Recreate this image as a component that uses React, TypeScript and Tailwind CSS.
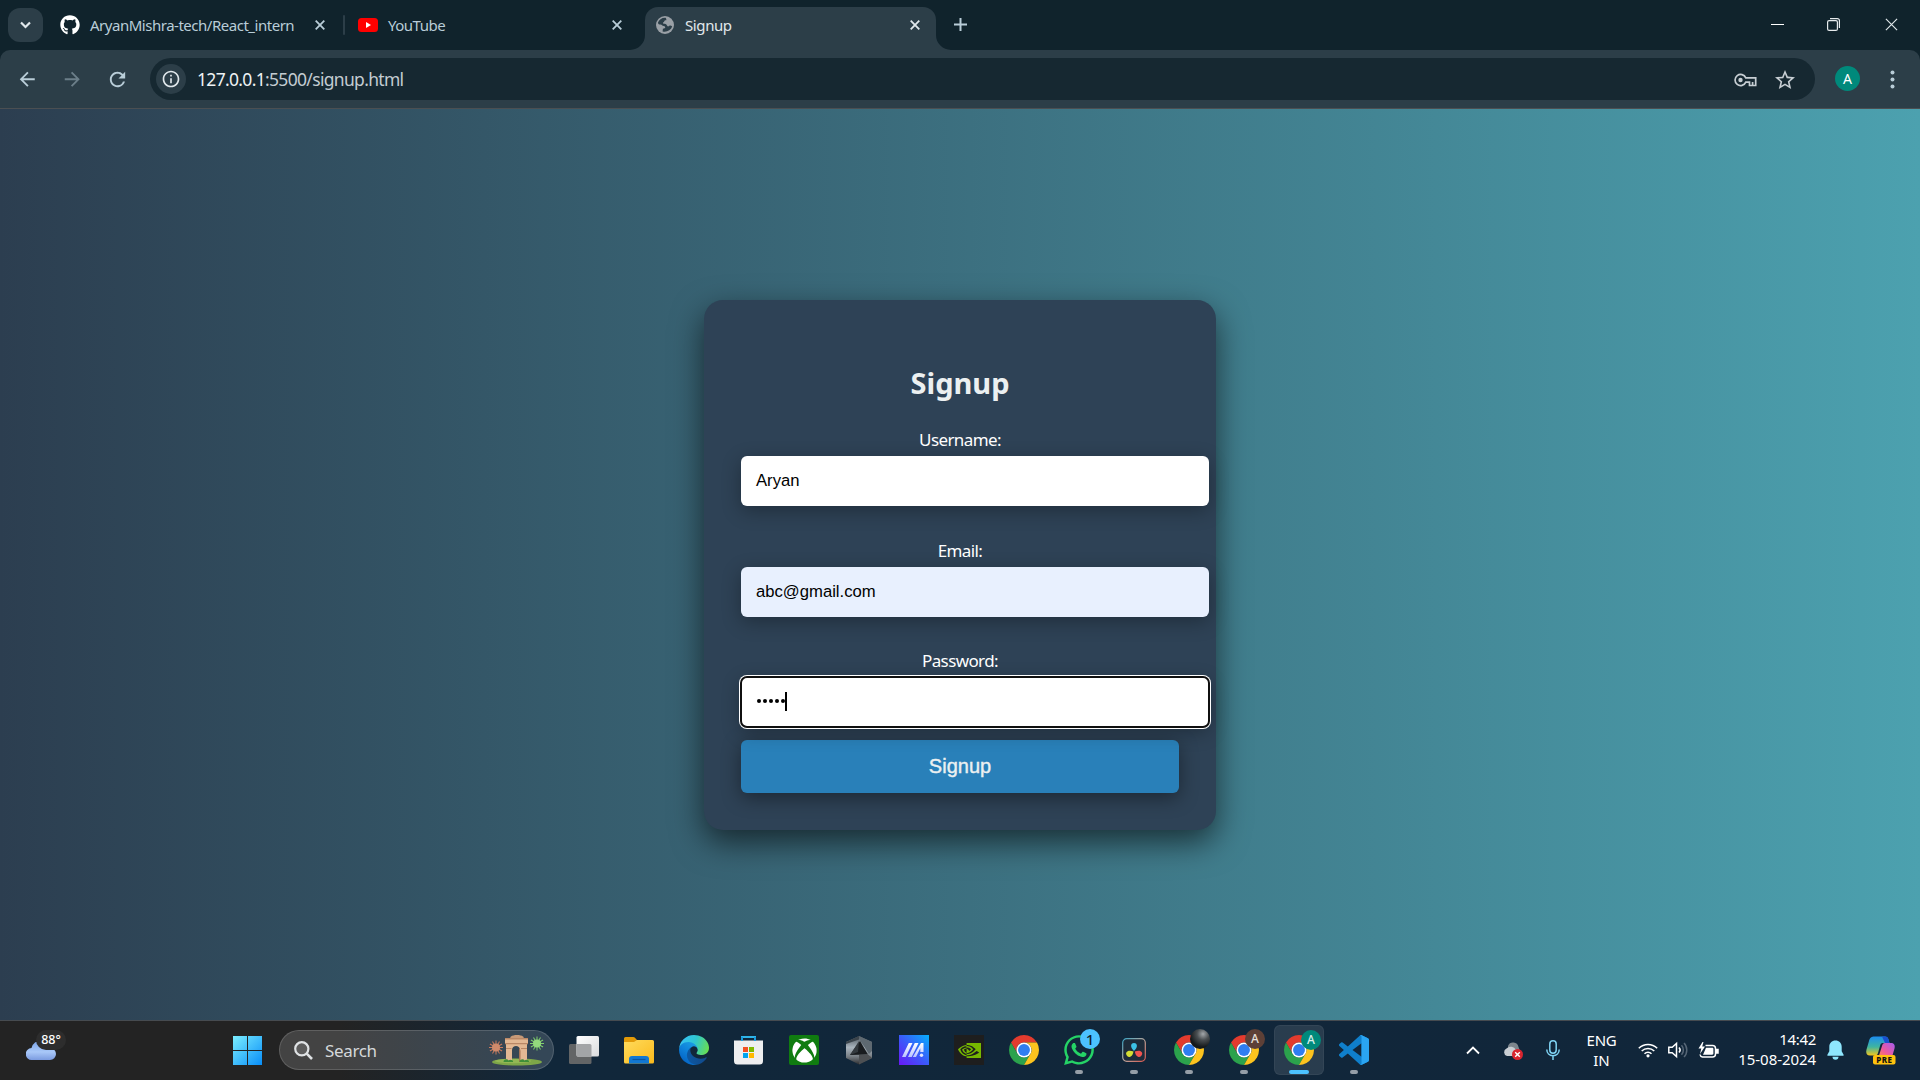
import React from "react";
import { FaGithub, FaWhatsapp, FaXbox } from "react-icons/fa";
import { SiNvidia } from "react-icons/si";
import { MdArrowBack, MdArrowForward, MdRefresh, MdInfoOutline, MdStarOutline } from "react-icons/md";

const UI = "font-['Noto_Sans','Open_Sans',sans-serif]";

function Cross({ size = 10, color = "#b9cdd8", w = 1.8 }: { size?: number; color?: string; w?: number }) {
  return (
    <svg width={size} height={size} viewBox="0 0 10 10" stroke={color} strokeWidth={w} className="shrink-0">
      <path d="M.7.7 9.3 9.3M9.3.7.7 9.3" />
    </svg>
  );
}

function GlobeIcon() {
  return (
    <svg width="18" height="18" viewBox="0 0 18 18" className="shrink-0">
      <circle cx="9" cy="9" r="9" fill="#9aa0a6" />
      <path
        d="M9.6 1.7C6 1.4 2.9 3.5 1.9 6.8c.2 1.4 1.3 1.7 2.6 1.8 1.6.1 1.5 1.3 3.2 1.5 1.2.2 1.5.7 1.5 1.5s-.9 1.1-2.3 1.1l-.3 2.8c3.9 1 8.2-.9 9.6-4.900-1.200-1.500-3-1.100-3.900-.200-1.200 0-1.400-2.100-2.700-2.500-1.200-.3-2.700 0-2.700-.9s1.300-.8 1.400-1.800c.1-.9 1.200-.9 2-.9.300-.9-.2-1.800-.7-2.600z"
        fill="#2c3e48"
      />
    </svg>
  );
}

function ChromeIcon() {
  return (
    <svg width="30" height="30" viewBox="2 2 44 44">
      <path fill="#e33b2e" d="M24 13h19.05A22 22 0 0 0 4.95 13l9.52 16.500A11 11 0 0 1 24 13z" />
      <path fill="#2ba24c" d="M14.470 29.5 4.950 13A22 22 0 0 0 24 46l9.530-16.500A11 11 0 0 1 14.470 29.500z" />
      <path fill="#fcc31e" d="M33.530 29.500 24 46A22 22 0 0 0 43.050 13H24a11 11 0 0 1 9.530 16.500z" />
      <circle cx="24" cy="24" r="11" fill="#fff" />
      <circle cx="24" cy="24" r="8.700" fill="#2f7df0" />
    </svg>
  );
}

function WindowsIcon() {
  return (
    <svg width="30" height="30" viewBox="0 0 30 30">
      <defs>
        <linearGradient id="win" x1="0" y1="0" x2="29" y2="29" gradientUnits="userSpaceOnUse">
          <stop offset="0" stopColor="#7df0ff" />
          <stop offset="1" stopColor="#0a8ff8" />
        </linearGradient>
      </defs>
      <path fill="url(#win)" d="M0 1h14v14H0zM15 1h14v14H15zM0 16h14v14H0zM15 16h14v14H15z" />
    </svg>
  );
}

function TaskViewIcon() {
  return (
    <svg width="30" height="30" viewBox="0 0 30 30">
      <defs>
        <linearGradient id="tv" x2="1" y2="1">
          <stop stopColor="#fff" />
          <stop offset="1" stopColor="#d9dbdd" />
        </linearGradient>
      </defs>
      <rect x="0" y="9" width="22.500" height="20" rx="1.500" fill="#636566" />
      <rect x="7.500" y="1" width="22.500" height="20.500" rx="1.500" fill="url(#tv)" />
      <path d="M7.500 9H21a1.500 1.500 0 0 1 1.500 1.500v11H9a1.500 1.500 0 0 1-1.500-1.500z" fill="#a3a5a7" />
    </svg>
  );
}

function FolderIcon() {
  return (
    <svg width="30" height="30" viewBox="0 0 30 30">
      <defs>
        <linearGradient id="fo" x2="1" y2="1">
          <stop stopColor="#ffdb5c" />
          <stop offset="1" stopColor="#fbba1c" />
        </linearGradient>
      </defs>
      <path d="M0 3.500A1.500 1.500 0 0 1 1.500 2h7.700c.6 0 1.100.2 1.500.6L13 5v6H0z" fill="#e29a08" />
      <path d="M0 7h10l3-2h15.500A1.500 1.500 0 0 1 30 6.500V27a1.500 1.500 0 0 1-1.500 1.500h-27A1.500 1.500 0 0 1 0 27z" fill="url(#fo)" />
      <path d="M5 28.500V24a3 3 0 0 1 3-3h14a3 3 0 0 1 3 3v4.500z" fill="#1278d2" />
      <path d="M8.500 24.500h13" stroke="#0b55a0" strokeWidth="1.200" />
    </svg>
  );
}

function EdgeIcon() {
  return (
    <svg width="30" height="30" viewBox="0 0 256 256">
      <defs>
        <linearGradient id="e1" x1="60" y1="180" x2="230" y2="180" gradientUnits="userSpaceOnUse">
          <stop stopColor="#0c59a4" />
          <stop offset="1" stopColor="#114a8b" />
        </linearGradient>
        <linearGradient id="e2" x1="150" y1="80" x2="50" y2="220" gradientUnits="userSpaceOnUse">
          <stop stopColor="#1b9de2" />
          <stop offset=".5" stopColor="#0f84dc" />
          <stop offset="1" stopColor="#0669c8" />
        </linearGradient>
        <linearGradient id="e3" x1="20" y1="60" x2="250" y2="140" gradientUnits="userSpaceOnUse">
          <stop stopColor="#35c1f1" />
          <stop offset=".45" stopColor="#2fc6cf" />
          <stop offset="1" stopColor="#6be04b" />
        </linearGradient>
      </defs>
      <path fill="url(#e1)" d="M231.070 190.540c-3.420 1.780-6.940 3.350-10.540 4.710-11.490 4.290-23.670 6.490-35.930 6.470-47.360 0-88.610-32.580-88.610-74.380a31.520 31.520 0 0 1 16.430-27.310c-42.840 1.800-53.850 46.440-53.850 72.590 0 73.950 68.150 81.440 82.830 81.440 7.920 0 19.860-2.300 27.030-4.560l1.310-.440a128.340 128.340 0 0 0 66.600-52.830 4 4 0 0 0-5.270-5.690z" />
      <path fill="url(#e2)" d="M105.730 241.420a79.200 79.200 0 0 1-22.740-21.340 80.720 80.720 0 0 1 29.530-120.050c3.140-1.470 8.500-4.140 15.640-4.010a32.350 32.350 0 0 1 25.690 13.020 31.880 31.880 0 0 1 6.360 18.660c0-.210 24.460-79.600-80-79.600-43.900 0-80 41.650-80 78.220a130.150 130.150 0 0 0 12.110 55.990 128 128 0 0 0 156.380 67.100 75.550 75.550 0 0 1-62.780-7.980z" />
      <path fill="url(#e3)" d="M152.330 148.860c-.810 1.050-3.300 2.500-3.300 5.660 0 2.610 1.700 5.120 4.720 7.230 14.380 10 41.490 8.680 41.560 8.680a59.560 59.560 0 0 0 30.270-8.350 61.380 61.380 0 0 0 30.430-52.880c.260-22.410-8-37.310-11.340-43.910C223.460 23.840 177.720 0 128 0A128 128 0 0 0 0 126.200c.480-36.540 36.800-66.050 80-66.050 3.500 0 23.460.340 42 10.070 16.340 8.580 24.900 18.940 30.850 29.210 6.180 10.670 7.280 24.150 7.280 29.520s-2.740 13.330-7.800 19.910z" />
    </svg>
  );
}

function StoreIcon() {
  return (
    <svg width="30" height="30" viewBox="0 0 30 30">
      <path d="M8 7V2h13v5" fill="none" stroke="#2fb5ea" strokeWidth="2" />
      <path d="M0 5.500h29V26a3.500 3.500 0 0 1-3.500 3.500h-22A3.500 3.500 0 0 1 0 26z" fill="#eeeeef" />
      <path d="M8 2v4M21 2v4" stroke="#1598dc" strokeWidth="1.800" />
      <path fill="#f25022" d="M9 12h5v5H9z" />
      <path fill="#7fba00" d="M15 12h5v5h-5z" />
      <path fill="#00a4ef" d="M9 18h5v5H9z" />
      <path fill="#ffb900" d="M15 18h5v5h-5z" />
    </svg>
  );
}

function XboxIcon() {
  return (
    <span className="flex h-[30px] w-[30px] items-center justify-center rounded-[2px] bg-[#107c10]">
      <FaXbox size={25} color="#fff" />
    </span>
  );
}

function HexIcon() {
  return (
    <svg width="30" height="30" viewBox="0 0 30 30">
      <defs>
        <linearGradient id="hx" x1="0" y1="0" x2="0" y2="1">
          <stop stopColor="#4b545b" />
          <stop offset=".4" stopColor="#a9b4bd" />
          <stop offset=".7" stopColor="#7c8389" />
          <stop offset="1" stopColor="#2c2d2f" />
        </linearGradient>
      </defs>
      <path d="M15 1 28 7v16l-13 6.500L2 23V7z" fill="url(#hx)" />
      <path d="M15 1 28 7v9l-3 3-8.500-13z" fill="#5e6971" />
      <path d="M16 6 24 19.500 6 20z" fill="#191c1f" />
      <path d="M15 6 6 20l8-3z" fill="#343a3f" />
      <path d="m24 19.500 4 3.500-13 6.500V20z" fill="#4d5053" />
      <path d="M15 1 2 7v2l13-4.500z" fill="#3b444b" />
    </svg>
  );
}

function MyAsusIcon() {
  return (
    <svg width="30" height="30" viewBox="0 0 30 30">
      <defs>
        <linearGradient id="ma" x1="0" y1="1" x2="1" y2="0">
          <stop stopColor="#6a17f5" />
          <stop offset=".5" stopColor="#3a5bfa" />
          <stop offset="1" stopColor="#05b0fb" />
        </linearGradient>
        <linearGradient id="mb" x2="0" y2="1">
          <stop stopColor="#fff" />
          <stop offset="1" stopColor="#b9c4ff" />
        </linearGradient>
      </defs>
      <path fill="url(#ma)" d="M0 0h30v30H0z" />
      <path fill="url(#mb)" d="M9.800 8h3.700L6.700 22H3zM15.800 8h3.700l-6.800 14H9zM22 8h2.500v9h-3.200v-3.800L17 22h-3.200z" />
      <circle cx="22.500" cy="20.300" r="1.700" fill="#e2e6ff" />
    </svg>
  );
}

function ResolveIcon() {
  return (
    <svg width="24" height="24" viewBox="0 0 24 24">
      <defs>
        <linearGradient id="rs" x2="1" y2="1">
          <stop stopColor="#3aa4c4" />
          <stop offset=".5" stopColor="#b9a69c" />
          <stop offset="1" stopColor="#d9574e" />
        </linearGradient>
      </defs>
      <rect x=".7" y=".7" width="22.600" height="22.600" rx="4" fill="#1d2b3a" stroke="url(#rs)" strokeWidth="1.200" />
      <path d="M12 13c-2-2-2.900-3.500-2.900-5.200a2.900 2.900 0 0 1 5.800 0c0 1.700-.9 3.200-2.900 5.200z" fill="#3cc1e6" />
      <path d="M11.500 13.500c-.5 2.700-1.300 4.200-2.800 4.900a3 3 0 0 1-3-5.200c1.500-.8 3.200-.5 5.800.3z" fill="#d5de33" />
      <path d="M12.800 13.500c2.600-.8 4.300-1.100 5.800-.3a3 3 0 0 1-3 5.200c-1.500-.7-2.300-2.200-2.800-4.900z" fill="#f0524f" />
    </svg>
  );
}

function VsCodeIcon() {
  return (
    <svg width="30" height="30" viewBox="0 0 24 24">
      <path
        fill="#0f7fcb"
        d="M23.150 2.587 18.210.210a1.494 1.494 0 0 0-1.705.290l-9.460 8.630-4.120-3.128a.999.999 0 0 0-1.276.057L.327 7.261A1 1 0 0 0 .326 8.740L3.899 12 .326 15.260a1 1 0 0 0 .001 1.479L1.650 17.940a.999.999 0 0 0 1.276.057l4.120-3.128 9.460 8.630a1.492 1.492 0 0 0 1.704.290l4.942-2.377A1.500 1.500 0 0 0 24 20.060V3.939a1.500 1.500 0 0 0-.850-1.352zm-5.146 14.861L10.826 12l7.178-5.448v10.896z"
      />
      <path fill="#2aa5f2" d="M18.210.210a1.494 1.494 0 0 0-1.705.290c.6-.4 1.500 0 1.500.9v21.200c0 .9-.9 1.300-1.500.9.400.4 1.100.5 1.705.290l4.940-2.377A1.500 1.500 0 0 0 24 20.060V3.939a1.500 1.500 0 0 0-.850-1.352z" />
    </svg>
  );
}

function GateArt() {
  const rays = Array.from({ length: 12 }, (_, i) => i * 30);
  return (
    <svg width="56" height="32" viewBox="0 0 56 32">
      <ellipse cx="29" cy="28" rx="25" ry="3.600" fill="#7da648" />
      <ellipse cx="25" cy="27" rx="18" ry="2.200" fill="#93b854" />
      <g stroke="#c97a5c" strokeWidth="1">
        {rays.map((r) => (
          <path key={r} d="M8 6.500v7" transform={`rotate(${r} 8 13.500)`} />
        ))}
      </g>
      <circle cx="8" cy="13.500" r="4" fill="#cf8a6b" />
      <g stroke="#7fcf6c" strokeWidth="1">
        {rays.map((r) => (
          <path key={r} d="M49 2.500v7" transform={`rotate(${r} 49 9.500)`} />
        ))}
      </g>
      <circle cx="49" cy="9.500" r="4" fill="#93d97c" />
      <path d="M23 2.500c2-2 10-2 12 0l1 1.500H22z" fill="#c79a78" />
      <path d="M17 4h23v5l-1 1v18h-7V16c0-5.500-8-5.500-8 0v12h-6V10l-1-1z" fill="#e3b893" />
      <path d="M17 4h23v1.500H17zM17 9h23v1.300H17zM18 14h5.500v1H18zM33 14h6v1h-6z" fill="#b98766" />
      <path d="M31 14c1 1 1.500 2 1.500 3.500V28H31z" fill="#a77555" />
      <path d="M15.500 28c0-3 4-3.500 5-1.500 1.500-1.500 5-.5 4.500 1.500zM31.500 28c0-3 4-3.500 5-1.500 1.500-1.500 5-.5 4.500 1.500z" fill="#3f8f38" />
    </svg>
  );
}

function Slot({ children, mark = "none" }: { children: React.ReactNode; mark?: "none" | "open" | "active" }) {
  return (
    <div
      className={
        mark === "active"
          ? "relative flex h-[50px] w-[50px] shrink-0 items-center justify-center rounded-[6px] border border-white/5 bg-white/10"
          : "relative flex h-[50px] w-[50px] shrink-0 items-center justify-center"
      }
    >
      {children}
      {mark === "open" && <span className="absolute top-[45px] left-[21px] h-1 w-2 rounded-full bg-[#959ea7]" />}
      {mark === "active" && <span className="absolute top-[44px] left-[14px] h-1 w-5 rounded-full bg-[#4cc2ff]" />}
    </div>
  );
}

function Badge({ children, tone }: { children?: React.ReactNode; tone: string }) {
  return (
    <span className={`absolute top-[4px] left-[26px] flex h-5 w-5 items-center justify-center rounded-full leading-none font-medium ${tone} ${UI}`}>
      {children}
    </span>
  );
}

function TabStrip() {
  return (
    <div className={`flex h-[50px] items-start bg-[#10232c] pl-2 text-[15px] tracking-[-0.2px] text-[#b9cdd8] ${UI}`}>
      <div className="mt-2 flex h-[34px] w-[35px] shrink-0 items-center justify-center rounded-[12px] bg-[#2c3e48]">
        <svg width="11" height="8" viewBox="0 0 11 8" fill="none" stroke="#e1e8ec" strokeWidth="2.200">
          <path d="m1 1.500 4.500 4.500L10 1.500" />
        </svg>
      </div>
      <div className="flex h-[50px] w-[300px] shrink-0 items-center pl-[17px]">
        <FaGithub size={20} color="#fff" className="shrink-0" />
        <span className="ml-[10px] w-[225px] tracking-[-0.48px] whitespace-nowrap">AryanMishra-tech/React_intern</span>
        <Cross />
      </div>
      <span className="mt-[15px] h-5 w-[2px] shrink-0 rounded-full bg-[#2c3e48]" />
      <div className="flex h-[50px] w-[300px] shrink-0 items-center pl-[13px]">
        <svg width="20" height="14" viewBox="0 0 20 14" className="shrink-0">
          <rect width="20" height="14" rx="3.500" fill="#f00" />
          <path d="m8 4 5 3-5 3z" fill="#fff" />
        </svg>
        <span className="ml-[10px] w-[224px] tracking-[-0.5px]">YouTube</span>
        <Cross />
      </div>
      <div className="relative mt-[7px] flex h-[43px] w-[291px] shrink-0 items-center rounded-t-[13px] bg-[#2c3e48] pb-[7px] pl-[11px] text-[#e1e8ec]">
        <svg width="15" height="15" viewBox="0 0 15 15" className="absolute bottom-0 -left-[15px]">
          <path d="M15 0v15H0A15 15 0 0 0 15 0z" fill="#2c3e48" />
        </svg>
        <GlobeIcon />
        <span className="ml-[11px] w-[225px] tracking-[-0.4px]">Signup</span>
        <Cross color="#e1e8ec" />
        <svg width="15" height="15" viewBox="0 0 15 15" className="absolute -right-[15px] bottom-0">
          <path d="M0 0v15h15A15 15 0 0 1 0 0z" fill="#2c3e48" />
        </svg>
      </div>
      <svg width="13" height="13" viewBox="0 0 13 13" className="mt-[18px] ml-[18px] shrink-0" stroke="#b9cdd8" strokeWidth="2">
        <path d="M6.500 0v13M0 6.500h13" />
      </svg>
      <div className="mt-[18px] mr-[22px] ml-auto flex items-center gap-[43px]">
        <svg width="13" height="13" viewBox="0 0 13 13" stroke="#fff">
          <path d="M0 6.500h13" />
        </svg>
        <svg width="13" height="13" viewBox="0 0 13 13" fill="none" stroke="#e6eaec" strokeWidth="1.200">
          <rect x=".6" y="2.600" width="9.800" height="9.800" rx="1.500" />
          <path d="M3 .6h7.400a2 2 0 0 1 2 2V10" />
        </svg>
        <div className="ml-[2px]">
          <Cross size={13} color="#dfe6e9" w={0.9} />
        </div>
      </div>
    </div>
  );
}

function Toolbar() {
  return (
    <div className="bg-[#10232c]">
      <div className="flex h-[59px] items-center rounded-t-[10px] border-b border-[#4b4f52] bg-[#2c3e48]">
        <div className="flex w-[150px] items-center gap-[22.500px] pl-4 text-[#b9cdd8]">
          <MdArrowBack size={22.500} />
          <MdArrowForward size={22.500} className="opacity-45" />
          <MdRefresh size={23} />
        </div>
        <div className="flex h-[42px] w-[1665px] items-center rounded-full bg-[#162831] pl-[6px]">
          <span className="flex h-[30px] w-[30px] items-center justify-center rounded-full bg-[#2c3e48] text-[#e1e8ec]">
            <MdInfoOutline size={20} />
          </span>
          <span className={`mt-[2px] ml-[11px] text-[17.500px] leading-none tracking-[-0.680px] text-[#c3ccd1] ${UI}`}>
            <span className="text-[#eef2f4]">127.0.0.1</span>:5500/signup.html
          </span>
          <svg width="23" height="14" viewBox="0 0 23 14" className="mt-[1px] ml-auto" fill="none" stroke="#c7ced3" strokeWidth="1.700">
            <path d="M11.800 4.800a5.600 5.600 0 1 0 0 4.400h3.700v3.300h6.200V4.800z" />
            <circle cx="6.500" cy="7" r="2.200" fill="#c7ced3" stroke="none" />
            <path d="M18.600 9v3" />
          </svg>
          <MdStarOutline size={24} color="#c7ced3" className="mt-[2px] mr-[18px] ml-[16px]" />
        </div>
        <span className={`-mt-px ml-5 flex h-[25px] w-[25px] items-center justify-center rounded-full bg-[#00897b] text-[14px] text-white ${UI}`}>A</span>
        <svg width="5" height="19" viewBox="0 0 5 19" fill="#b9cdd8" className="ml-[30px]">
          <circle cx="2.500" cy="2.500" r="2" />
          <circle cx="2.500" cy="9.500" r="2" />
          <circle cx="2.500" cy="16.500" r="2" />
        </svg>
      </div>
    </div>
  );
}

function Field({ label, children }: { label: string; children: React.ReactNode }) {
  return (
    <div className="flex flex-col">
      <span className={`h-[33px] text-center text-[17px] leading-[34px] tracking-[-0.6px] text-white ${UI}`}>{label}</span>
      {children}
    </div>
  );
}

const inputBox =
  "flex w-[468px] items-center rounded-[6px] px-[15px] text-[16.670px] text-black";

function SignupCard() {
  return (
    <div className="h-[530px] w-[512px] rounded-[19px] bg-[#2e4256] px-[37px] pt-[61px] font-['Liberation_Sans',Arial,sans-serif] shadow-[0_12px_32px_rgba(0,0,0,0.6)]">
      <h1 className={`h-[62px] text-center text-[29px] leading-[44px] font-bold text-[#ecf0f1] ${UI}`}>Signup</h1>
      <div className="flex flex-col">
        <Field label="Username:">
          <div className={`h-[50px] bg-white pb-px shadow-[0_5px_19px_rgba(0,0,0,0.3)] ${inputBox}`}>Aryan</div>
        </Field>
        <div className="mt-7">
          <Field label="Email:">
            <div className={`h-[50px] bg-[#e8f0fe] pb-px shadow-[0_5px_19px_rgba(0,0,0,0.3)] ${inputBox}`}>abc@gmail.com</div>
          </Field>
        </div>
        <div className="mt-[27px]">
          <Field label="Password:">
            <div className={`h-[50px] bg-white shadow-[0_0_0_2px_#ffffff,0_5px_19px_rgba(0,0,0,0.3)] outline-2 -outline-offset-1 outline-[#101010] ${inputBox}`}>
              <div className="mb-px ml-px flex items-center gap-[2px]">
                {[0, 1, 2, 3, 4].map((i) => (
                  <span key={i} className="h-1 w-1 rounded-full bg-black" />
                ))}
                <span className="-ml-[2px] h-[19px] w-[2px] bg-black" />
              </div>
            </div>
          </Field>
        </div>
      </div>
      <div className="mt-[13px] flex h-[53px] w-[438px] items-center justify-center rounded-[6px] bg-[#2980b9] text-[20px] text-[#ecf0f1] shadow-[0_5px_19px_rgba(0,0,0,0.4)] [-webkit-text-stroke:0.4px_#ecf0f1]">
        Signup
      </div>
    </div>
  );
}

function Tray() {
  return (
    <div className={`ml-auto flex items-center text-[15px] leading-[20px] text-white ${UI}`}>
      <svg width="14" height="9" viewBox="0 0 14 9" fill="none" stroke="#fff" strokeWidth="1.800" className="mr-[23px]">
        <path d="m1 7.500 6-6 6 6" />
      </svg>
      <svg width="20" height="18" viewBox="0 0 20 18" className="mt-[2px] mr-[23px]">
        <path d="M5 4a5.500 5.500 0 0 1 10.500 1L17 9H5z" fill="#7d868d" />
        <path d="M4 14a4 4 0 0 1-.5-7.500A6 6 0 0 1 13 8l3 6z" fill="#c9ced3" />
        <circle cx="14.500" cy="12.500" r="5.500" fill="#d9252f" />
        <path d="m12.200 10.200 4.600 4.600m0-4.600-4.600 4.600" stroke="#fff" strokeWidth="1.400" />
      </svg>
      <svg width="14" height="20" viewBox="0 0 14 20" fill="none" stroke="#7fd3f3" strokeWidth="1.500" className="mr-[26px]">
        <rect x="3.800" y=".8" width="6.400" height="12.500" rx="3.200" />
        <path d="M.8 9.500c0 3.700 2.700 6.200 6.200 6.200s6.200-2.500 6.200-6.200M7 15.700V20" />
      </svg>
      <div className="mr-[21px] mb-px w-[31px] text-center">
        <div className="tracking-[-0.3px]">ENG</div>
        <div>IN</div>
      </div>
      <svg width="20" height="16" viewBox="0 0 20 16" fill="none" stroke="#fff" strokeWidth="1.500" className="mr-[10px]">
        <path d="M.8 6.200a13 13 0 0 1 18.400 0M3.700 9a9 9 0 0 1 12.600 0M6.500 11.800a5 5 0 0 1 7 0" />
        <circle cx="10" cy="13.800" r="1.600" fill="#fff" stroke="none" />
      </svg>
      <svg width="20" height="18" viewBox="0 0 20 18" fill="none" stroke="#fff" strokeWidth="1.500" className="mr-[10px]">
        <path d="M.8 6.300h3.400L8.500 2.500v13l-4.300-3.800H.8zM11 6.500c1.300 1.400 1.300 3.600 0 5" />
        <path d="M13.500 4.200c2.500 2.500 2.500 7.100 0 9.600M16 2c3.700 3.700 3.700 10.300 0 14" stroke="#566676" />
      </svg>
      <svg width="21" height="17" viewBox="0 0 21 17" fill="none" stroke="#fff" strokeWidth="1.500" className="mr-[17px]">
        <path d="M7.500 3.500h7a3 3 0 0 1 3 3V12a3 3 0 0 1-3 3h-10a3 3 0 0 1-2.500-2.500" />
        <path d="M18.500 7.500h1.500v3.500h-1.500z" fill="#fff" />
        <path d="M8 5.800h6.200c.7 0 1.200.5 1.200 1.200v4.500c0 .7-.5 1.200-1.200 1.200H5z" fill="#fff" stroke="none" />
        <path d="M4.500 0 .5 6.500h2.800L2 12l5-7.500H4.200L5.500 0z" fill="#fff" stroke="none" />
      </svg>
      <div className="mr-[11px] mb-[3px] w-[80px] text-right whitespace-nowrap">
        <div className="tracking-[-0.300px]">14:42</div>
        <div className="tracking-[-0.060px]">15-08-2024</div>
      </div>
      <svg width="17" height="20" viewBox="0 0 17 20" fill="#8ee6fd" className="mr-[22px]">
        <path d="M8.500.5c-3.600 0-6.200 2.700-6.200 6.200v4.500L.4 14.800c-.2.500 0 1 .6 1h15c.6 0 .8-.5.6-1l-1.900-3.600V6.700C14.700 3.200 12.100.5 8.500.5zM5.500 16.800a3 3 0 0 0 6 0z" />
      </svg>
      <svg width="30" height="30" viewBox="0 0 30 30" className="mr-[24px]">
        <defs>
          <linearGradient id="c1" x1="0" y1="0" x2="0" y2="1">
            <stop stopColor="#1c8df0" />
            <stop offset=".55" stopColor="#3fb5a0" />
            <stop offset="1" stopColor="#f4c71c" />
          </linearGradient>
          <linearGradient id="c2" x1="1" y1="0" x2="0" y2="1">
            <stop stopColor="#a45cf0" />
            <stop offset=".6" stopColor="#ee5a9c" />
            <stop offset="1" stopColor="#f98a4a" />
          </linearGradient>
        </defs>
        <path d="M8.500 1.500H19c2 0 3 1 3.500 3l1 3.500H17c-2 0-2.500 1-3 3l-2 7c-.6 2-1.500 2.500-3.500 2.500H4c-3.500 0-4.300-2.500-3.500-6l2.500-8.500c1-3.500 2.500-4.500 5.500-4.500z" fill="url(#c1)" />
        <path d="M16 1.500h3c2 0 3 1 3.500 3l1 3.500H19z" fill="#1a50cf" />
        <path d="M19 8h6c3.500 0 4.200 2.500 3.500 5.500L26 22H12.500L16 11c.5-2 1.300-3 3-3z" fill="url(#c2)" />
        <rect x="7" y="20" width="22.500" height="9.500" rx="2" fill="#ffc20e" />
        <text x="18.400" y="27.600" textAnchor="middle" fontSize="8" fontWeight="800" letterSpacing=".5" fill="#111" fontFamily="Noto Sans, sans-serif">PRE</text>
      </svg>
    </div>
  );
}

function Taskbar() {
  return (
    <div className="flex h-[60px] items-center border-t border-[#464b50] bg-[linear-gradient(90deg,#232323_0px,#232323_340px,#11273a_540px,#11263a_1920px)] pb-px">
      <div className="relative ml-[26px] h-[40px] w-[40px] shrink-0">
        <svg width="30" height="18" viewBox="0 0 30 18" className="absolute top-[12px] left-0">
          <defs>
            <linearGradient id="cl" x2="0" y2="1">
              <stop stopColor="#7ea6ea" />
              <stop offset=".55" stopColor="#a9c8f8" />
              <stop offset="1" stopColor="#7b9be0" />
            </linearGradient>
          </defs>
          <path d="M6 18a6 6 0 0 1-.5-12A9 9 0 0 1 9 .5c3-1.500 8 1 9 5.500h6a6 6 0 0 1 0 12z" fill="url(#cl)" />
        </svg>
        <span className={`absolute top-0 left-[10px] flex h-[20px] w-[30px] items-center justify-center rounded-full bg-[#2d2d2d] text-[12.500px] font-medium text-white ${UI}`}>88°</span>
      </div>
      <div className="ml-[167px] shrink-0">
        <WindowsIcon />
      </div>
      <div className="ml-4 flex h-10 w-[275px] shrink-0 items-center rounded-full border border-white/15 bg-white/15 pl-[14px]">
        <svg width="19" height="19" viewBox="0 0 19 19" fill="none" stroke="#dfe2e4" strokeWidth="2.200">
          <circle cx="7.800" cy="7.800" r="6.600" fill="#ffffff22" />
          <path d="m12.700 12.700 5.300 5.300" strokeWidth="2.600" />
        </svg>
        <span className={`mt-px ml-3 text-[17px] tracking-[-0.350px] text-[#d5d8da] ${UI}`}>Search</span>
        <div className="mr-[9px] ml-auto">
          <GateArt />
        </div>
      </div>
      <div className="ml-[5px] flex shrink-0 gap-[5px]">
        <Slot><TaskViewIcon /></Slot>
        <Slot><FolderIcon /></Slot>
        <Slot><EdgeIcon /></Slot>
        <Slot><StoreIcon /></Slot>
        <Slot><XboxIcon /></Slot>
        <Slot><HexIcon /></Slot>
        <Slot><MyAsusIcon /></Slot>
        <Slot>
          <span className="flex h-[30px] w-[30px] items-center justify-center bg-[#1e1e1e]">
            <SiNvidia size={23} color="#76b900" />
          </span>
        </Slot>
        <Slot><ChromeIcon /></Slot>
        <Slot mark="open">
          <FaWhatsapp size={34} color="#25d366" />
          <Badge tone="bg-[#4cc2ff] text-[#10202c] text-[15px]">1</Badge>
        </Slot>
        <Slot mark="open"><ResolveIcon /></Slot>
        <Slot mark="open">
          <ChromeIcon />
          <Badge tone="bg-[radial-gradient(circle_at_65%_25%,#a3a7aa_0px,#4a4f52_6px,#15191b_13px)] text-white text-[12px]" />
        </Slot>
        <Slot mark="open">
          <ChromeIcon />
          <Badge tone="bg-[#5d4037] text-[#e6e0dd] text-[12px]">A</Badge>
        </Slot>
        <Slot mark="active">
          <ChromeIcon />
          <Badge tone="bg-[#00897b] text-[#d8efec] text-[12px]">A</Badge>
        </Slot>
        <Slot mark="open"><VsCodeIcon /></Slot>
      </div>
      <Tray />
    </div>
  );
}

export default function App() {
  return (
    <div className="flex h-[1080px] w-[1920px] flex-col overflow-hidden">
      <TabStrip />
      <Toolbar />
      <main className="flex h-[911px] items-center justify-center bg-[linear-gradient(to_right,#2c3e50,#4ca1af)]">
        <SignupCard />
      </main>
      <Taskbar />
    </div>
  );
}
